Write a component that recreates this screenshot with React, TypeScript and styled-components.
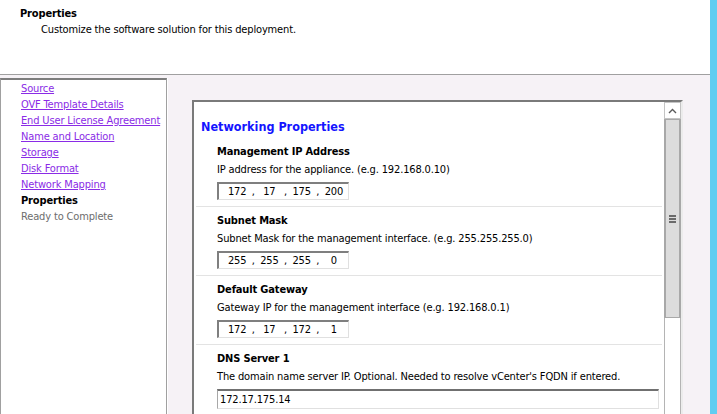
import React from "react";
import styled, { createGlobalStyle } from "styled-components";

const Global = createGlobalStyle`
  html, body { margin: 0; padding: 0; background: #fff; overflow: hidden; }
  body {
    font-family: "DejaVu Sans Condensed", "DejaVu Sans", sans-serif;
    font-size: 11px;
    letter-spacing: -0.15px;
    color: #000;
  }
  #root { width: 717px; height: 414px; }
`;

const Frame = styled.div`
  display: flex;
  width: 717px;
  height: 414px;
  overflow: hidden;
`;

const Main = styled.div`
  flex: 1;
  min-width: 0;
  display: flex;
  flex-direction: column;
`;

const Accent = styled.div`
  width: 7px;
  background: #60cdf1;
`;

const Header = styled.header`
  height: 75px;
  box-sizing: border-box;
  padding: 6px 0 0 20px;
  background: #fff;
  border-bottom: 1px solid #a0a0a0;
`;

const Title = styled.div`
  font-weight: bold;
  line-height: 16px;
`;

const Subtitle = styled.div`
  padding-left: 21px;
  line-height: 16px;
`;

const Body = styled.div`
  flex: 1;
  min-height: 0;
  display: flex;
  background: #f6f2f6;
`;

const Nav = styled.nav`
  width: 167px;
  box-sizing: border-box;
  margin-top: 3px;
  padding: 1px 0 0 20px;
  background: #fff;
  border-top: 2px solid #7d7d7d;
  border-left: 1px solid #a0a0a0;
  border-right: 1px solid #a0a0a0;
  box-shadow: 1px 0 0 #fff;
`;

const NavItem = styled.div<{ $state: "link" | "current" | "todo" }>`
  line-height: 16px;
  white-space: nowrap;
  color: ${(p) => (p.$state === "link" ? "#8a2be6" : p.$state === "current" ? "#000" : "#6d6d6d")};
  text-decoration: ${(p) => (p.$state === "link" ? "underline" : "none")};
  font-weight: ${(p) => (p.$state === "current" ? "bold" : "normal")};
`;

const Panel = styled.section`
  width: 491px;
  box-sizing: border-box;
  margin: 25px 0 0 25px;
  background: #fff;
  border-top: 2px solid #7a7a7a;
  border-left: 2px solid #7a7a7a;
  border-right: 2px solid #ececec;
  display: flex;
`;

const Content = styled.div`
  flex: 1;
  min-width: 0;
  padding-top: 17px;
`;

const Heading = styled.h2`
  margin: 0 0 3px;
  padding-left: 7px;
  font-size: 12.5px;
  line-height: 16px;
  letter-spacing: 0;
  font-weight: bold;
  color: #1414ff;
`;

const Section = styled.div<{ $last?: boolean }>`
  margin: 0 2px;
  padding: 5px 0 6px 21px;
  border-bottom: ${(p) => (p.$last ? "none" : "1px solid #e3e3e3")};
`;

const Label = styled.div`
  font-weight: bold;
  line-height: 18px;
`;

const Desc = styled.div`
  line-height: 18px;
  margin-bottom: 3px;
  white-space: nowrap;
`;

const IpBox = styled.div`
  width: 132px;
  height: 18px;
  box-sizing: border-box;
  border-top: 2px solid #7f7f7f;
  border-left: 2px solid #7f7f7f;
  border-right: 1px solid #e0e0e0;
  border-bottom: 1px solid #e0e0e0;
  padding-left: 4px;
  display: grid;
  grid-template-columns: 1fr 4px 1fr 4px 1fr 4px 1fr;
  align-items: center;
  line-height: 14px;
`;

const Octet = styled.span`
  text-align: center;
`;

const Dot = styled.span`
  text-align: center;
`;

const TextBox = styled.div`
  width: 442px;
  height: 20px;
  box-sizing: border-box;
  border-top: 2px solid #707070;
  border-left: 1px solid #a8a8a8;
  border-right: 1px solid #e0e0e0;
  border-bottom: 1px solid #e0e0e0;
  padding-left: 2px;
  line-height: 17px;
`;

const Scrollbar = styled.div`
  width: 17px;
  display: flex;
  flex-direction: column;
`;

const UpButton = styled.div`
  height: 17px;
  box-sizing: border-box;
  border: 1px solid #c4c4c4;
  background: #fff;
  display: flex;
  align-items: center;
  justify-content: center;
`;

const Thumb = styled.div`
  height: 199px;
  box-sizing: border-box;
  background: #dcdcdc;
  border: 1px solid #a8a8a8;
  box-shadow: inset 1px 0 0 #a8a8a8, inset -1px 0 0 #a8a8a8;
  display: flex;
  align-items: center;
  justify-content: center;
`;

const Grip = styled.div`
  width: 7px;
  display: flex;
  flex-direction: column;
  gap: 1px;
  span {
    display: block;
    height: 2px;
    background: #6a6a6a;
  }
`;

const Track = styled.div`
  flex: 1;
  background: #fff;
  border-left: 1px solid #b4b4b4;
  border-right: 1px solid #b4b4b4;
`;

const navItems: { label: string; state: "link" | "current" | "todo" }[] = [
  { label: "Source", state: "link" },
  { label: "OVF Template Details", state: "link" },
  { label: "End User License Agreement", state: "link" },
  { label: "Name and Location", state: "link" },
  { label: "Storage", state: "link" },
  { label: "Disk Format", state: "link" },
  { label: "Network Mapping", state: "link" },
  { label: "Properties", state: "current" },
  { label: "Ready to Complete", state: "todo" },
];

const ipFields = [
  {
    label: "Management IP Address",
    desc: "IP address for the appliance. (e.g. 192.168.0.10)",
    ip: ["172", "17", "175", "200"],
  },
  {
    label: "Subnet Mask",
    desc: "Subnet Mask for the management interface. (e.g. 255.255.255.0)",
    ip: ["255", "255", "255", "0"],
  },
  {
    label: "Default Gateway",
    desc: "Gateway IP for the management interface (e.g. 192.168.0.1)",
    ip: ["172", "17", "172", "1"],
  },
];

function Ip({ parts }: { parts: string[] }) {
  return (
    <IpBox>
      {parts.map((p, i) => (
        <React.Fragment key={i}>
          {i > 0 && <Dot>,</Dot>}
          <Octet>{p}</Octet>
        </React.Fragment>
      ))}
    </IpBox>
  );
}

export default function App() {
  return (
    <>
      <Global />
      <Frame>
        <Main>
          <Header>
            <Title>Properties</Title>
            <Subtitle>Customize the software solution for this deployment.</Subtitle>
          </Header>
          <Body>
            <Nav>
              {navItems.map((n) => (
                <NavItem key={n.label} $state={n.state}>
                  {n.label}
                </NavItem>
              ))}
            </Nav>
            <Panel>
              <Content>
                <Heading>Networking Properties</Heading>
                {ipFields.map((f) => (
                  <Section key={f.label}>
                    <Label>{f.label}</Label>
                    <Desc>{f.desc}</Desc>
                    <Ip parts={f.ip} />
                  </Section>
                ))}
                <Section $last>
                  <Label>DNS Server 1</Label>
                  <Desc>The domain name server IP. Optional. Needed to resolve vCenter's FQDN if entered.</Desc>
                  <TextBox>172.17.175.14</TextBox>
                </Section>
              </Content>
              <Scrollbar>
                <UpButton>
                  <svg width="9" height="6" viewBox="0 0 9 6">
                    <polyline points="1,5 4.5,1.5 8,5" fill="none" stroke="#5a5a5a" strokeWidth="1.4" />
                  </svg>
                </UpButton>
                <Thumb>
                  <Grip>
                    <span />
                    <span />
                    <span />
                  </Grip>
                </Thumb>
                <Track />
              </Scrollbar>
            </Panel>
          </Body>
        </Main>
        <Accent />
      </Frame>
    </>
  );
}
